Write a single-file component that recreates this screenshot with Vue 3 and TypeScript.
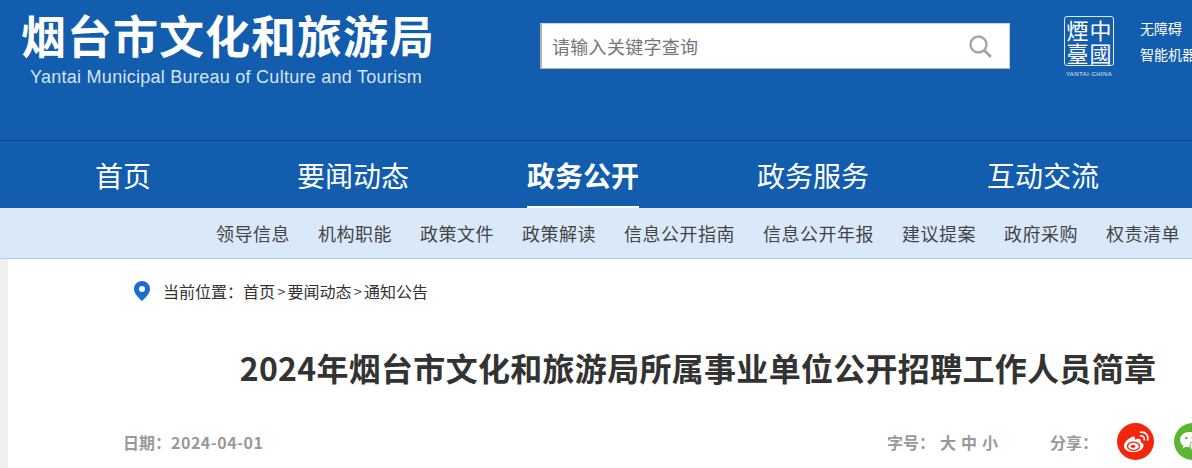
<script setup lang="ts">
const mainNav = [
  { label: '首页', active: false },
  { label: '要闻动态', active: false },
  { label: '政务公开', active: true },
  { label: '政务服务', active: false },
  { label: '互动交流', active: false },
]
const subNav = ['领导信息', '机构职能', '政策文件', '政策解读', '信息公开指南', '信息公开年报', '建议提案', '政府采购', '权责清单']
const crumbs = ['首页', '要闻动态', '通知公告']
</script>

<template>
  <div class="page">
    <header class="top">
      <div class="brand">
        <div class="brand__cn">烟台市文化和旅游局</div>
        <div class="brand__en">Yantai Municipal Bureau of Culture and Tourism</div>
      </div>
      <div class="search">
        <span class="search__hint">请输入关键字查询</span>
        <svg class="search__icon" width="24" height="24" viewBox="0 0 24 24" fill="none" stroke="#a6a6a6">
          <circle cx="10.500" cy="10.500" r="8" stroke-width="2.400" />
          <path d="M16.500 16.500L22 22" stroke-width="3" stroke-linecap="round" />
        </svg>
      </div>
      <div class="seal-wrap">
        <div class="seal">
          <span>煙</span><span>中</span><span>臺</span><span>國</span>
        </div>
        <div class="seal-cap">YANTAI·CHINA</div>
      </div>
      <div class="quick">
        <a>无障碍</a>
        <a>智能机器人</a>
      </div>
    </header>

    <nav class="nav">
      <a v-for="item in mainNav" :key="item.label" class="nav__item" :class="{ 'nav__item--on': item.active }">
        <span class="nav__txt">{{ item.label }}</span>
      </a>
    </nav>

    <div class="subnav">
      <a v-for="item in subNav" :key="item">{{ item }}</a>
    </div>

    <main class="body">
      <div class="sheet">
        <div class="crumb">
          <svg class="crumb__pin" width="16" height="20" viewBox="0 0 16 20">
            <path fill="#1c6bd0" fill-rule="evenodd" d="M8 0a8 8 0 0 1 8 8c0 4.500-4.600 9-8 12C4.600 17 0 12.500 0 8a8 8 0 0 1 8-8zm0 5a3 3 0 1 0 0 6 3 3 0 0 0 0-6z" />
          </svg>
          <span class="crumb__lead">当前位置：</span>
          <template v-for="(c, i) in crumbs" :key="c">
            <span v-if="i > 0" class="crumb__sep">&gt;</span>
            <a>{{ c }}</a>
          </template>
        </div>

        <h1 class="title">2024年烟台市文化和旅游局所属事业单位公开招聘工作人员简章</h1>

        <div class="meta">
          <div class="meta__date">日期：<span class="meta__num">2024-04-01</span></div>
          <div class="meta__size"><span class="meta__lead">字号：</span><span>大</span><span>中</span><span>小</span></div>
          <div class="meta__share">分享：</div>
          <span class="share share--weibo">
            <svg width="26" height="22" viewBox="0 0 26 22" fill="none">
              <path fill="#fff" d="M10 5.500C5.500 7 .5 11.500 1 15.500 1.500 19.500 6.500 21.500 11.500 21c5.500-.5 9.500-3.500 9-7-.3-1.800-2-2.700-3-2.800.6-1.600.4-2.800-.7-3.200-1.500-.5-3.800.5-4.800 1.100.4-2.400-.2-4.100-2-3.600z" />
              <ellipse cx="10.500" cy="15.300" rx="6" ry="4.100" stroke="#f4250d" stroke-width="1.300" />
              <ellipse cx="10" cy="15.300" rx="2.200" ry="1.600" fill="#f4250d" />
              <path stroke="#fff" stroke-width="1.600" stroke-linecap="round" d="M17.500 5c2.500-.5 4.300 1.300 3.700 3.800M17.500 1.200c5-.8 8.300 3.300 7 7.800" />
            </svg>
          </span>
          <span class="share share--wechat">
            <svg width="28" height="24" viewBox="0 0 28 24">
              <path fill="#fff" d="M10.500 2C5.300 2 1 5.500 1 9.800c0 2.500 1.400 4.600 3.500 6L3.700 18.500l3.200-1.700c1.100.3 2.300.5 3.600.5 5.200 0 9.500-3.400 9.500-7.500S15.700 2 10.500 2z" />
              <circle cx="7.200" cy="8" r="1.300" fill="#5db535" />
              <circle cx="13.800" cy="8" r="1.300" fill="#5db535" />
              <path fill="#fff" stroke="#5db535" d="M19 9.500c-4.400 0-8 2.900-8 6.400s3.600 6.400 8 6.400c.9 0 1.800-.1 2.700-.4l2.600 1.400-.7-2.300c1.700-1.200 3.400-3 3.400-5.100 0-3.500-3.600-6.400-8-6.400z" />
            </svg>
          </span>
        </div>
      </div>
    </main>
  </div>
</template>

<style scoped>
.page {
  width: 1192px;
  height: 468px;
  overflow: hidden;
  font-family: "Noto Sans CJK SC", "Liberation Sans", sans-serif;
  white-space: nowrap;
}

.top {
  height: 140px;
  box-sizing: border-box;
  background: #125dae;
  display: flex;
  align-items: flex-start;
  padding-left: 22px;
}

.brand {
  flex: 0 0 518px;
  padding-top: 5px;
}

.brand__cn {
  font-size: 45px;
  line-height: 60px;
  font-weight: 700;
  letter-spacing: 1px;
  margin-left: -1px;
  color: #fff;
}

.brand__en {
  font-family: "Liberation Sans", sans-serif;
  font-size: 18px;
  line-height: 20px;
  letter-spacing: 0.27px;
  color: #d6e4f4;
  margin: 2px 0 0 8px;
}

.search {
  flex: 0 0 470px;
  box-sizing: border-box;
  height: 46px;
  margin-top: 23px;
  background: #fff;
  border: 1px solid #c8d0d8;
  border-left: 2px solid #b0b0b0;
  border-bottom: 1px solid #b0b0b0;
  display: flex;
  align-items: center;
  justify-content: space-between;
  padding: 0 17px 0 10px;
}

.search__hint {
  font-size: 18px;
  letter-spacing: 0.3px;
  color: #757575;
}

.seal-wrap {
  flex: 0 0 50px;
  margin: 16px 26px 0 54px;
}

.seal {
  box-sizing: border-box;
  width: 50px;
  height: 50px;
  border: 1.5px solid #dfeaf6;
  border-radius: 3px;
  display: grid;
  grid-template-columns: 23px 23px;
  grid-template-rows: 23px 23px;
  place-content: center;
  color: #fff;
  font-family: "Noto Sans CJK TC", sans-serif;
  font-size: 22px;
}

.seal span {
  display: block;
  height: 23px;
  line-height: 23px;
  text-align: center;
}

.seal-cap {
  font-family: "Liberation Sans", sans-serif;
  font-size: 6px;
  line-height: 8px;
  margin-top: 4px;
  letter-spacing: 0.4px;
  text-align: center;
  color: #e6eef8;
}

.quick {
  display: flex;
  flex-direction: column;
  gap: 6px;
  padding-top: 18px;
  font-size: 14px;
  line-height: 20px;
  color: #fff;
}

.nav {
  height: 68px;
  box-sizing: border-box;
  border-top: 1px solid #0f4a86;
  background: #125dae;
  display: flex;
  padding-left: 8px;
}

.nav__item {
  flex: 0 0 230px;
  display: flex;
  justify-content: center;
  color: #fff;
  font-size: 28px;
}

.nav__txt {
  height: 67px;
  box-sizing: border-box;
  line-height: 68px;
}

.nav__item--on .nav__txt {
  font-weight: 700;
  border-bottom: 2px solid #fff;
}

.subnav {
  height: 51px;
  box-sizing: border-box;
  background: #d9e9fa;
  border-bottom: 1px solid #a5cdf0;
  display: flex;
  justify-content: flex-end;
  align-items: center;
  gap: 28px;
  padding-right: 12px;
  font-size: 18px;
  letter-spacing: 0.5px;
  color: #444;
}

.body {
  height: 209px;
  background: #f0f0f0;
  padding-left: 8px;
}

.sheet {
  height: 100%;
  background: #fff;
  padding-left: 112px;
}

.crumb {
  display: flex;
  align-items: center;
  height: 38px;
  padding: 13px 0 0 14px;
  font-size: 16px;
  color: #333;
}

.crumb__pin {
  margin-right: 13px;
  flex-shrink: 0;
}

.crumb__lead {
  width: 80px;
}

.crumb__sep {
  width: 12.500px;
  text-align: center;
  font-size: 14px;
}

.title {
  width: 1156px;
  margin: 0;
  padding-top: 33px;
  font-size: 32px;
  line-height: 48px;
  letter-spacing: 0.3px;
  font-weight: 700;
  color: #333;
  text-align: center;
}

.meta {
  width: 1156px;
  margin-top: 32px;
  display: flex;
  align-items: center;
  font-size: 16px;
  font-weight: 700;
  color: #999;
}

.meta__date {
  flex: 0 0 767px;
  padding-left: 3px;
  box-sizing: border-box;
}

.meta__num {
  letter-spacing: 0.5px;
}

.meta__size {
  flex: 0 0 163px;
}

.meta__lead {
  display: inline-block;
  width: 53px;
}

.meta__size span:not(.meta__lead) {
  margin-right: 5px;
}

.meta__share {
  flex: 0 0 67px;
}

.share {
  flex: 0 0 37px;
  height: 37px;
  border-radius: 50%;
  display: flex;
  align-items: center;
  justify-content: center;
  margin-right: 20px;
}

.share--weibo {
  background: #f4250d;
}

.share--wechat {
  background: #5db535;
}
</style>

<style>
html,
body {
  margin: 0;
  overflow: hidden;
}
</style>
